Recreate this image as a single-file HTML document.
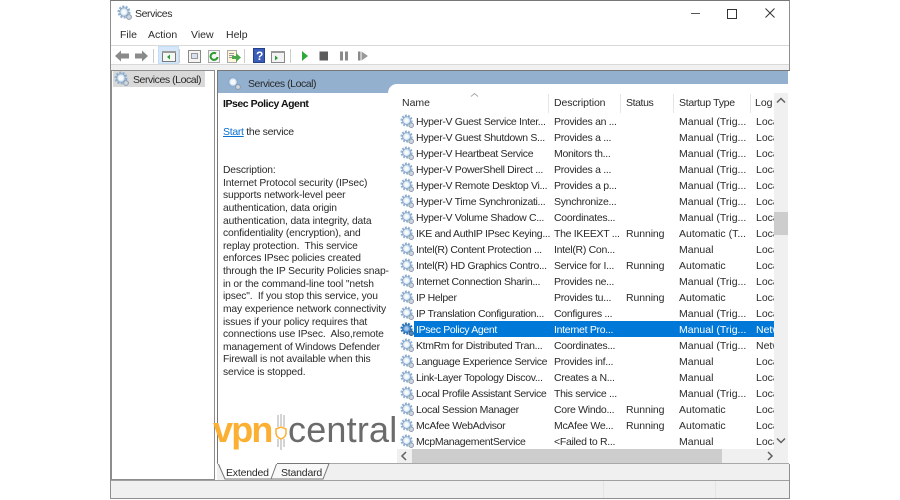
<!DOCTYPE html>
<html><head><meta charset="utf-8"><style>
html,body{margin:0;padding:0;width:900px;height:500px;background:#fff;overflow:hidden}
body{font-family:"Liberation Sans",sans-serif;font-size:10.5px;color:#2a2a2a;position:relative}
#root{position:absolute;left:0;top:0;width:900px;height:500px;filter:blur(.3px)}
.a{position:absolute;white-space:nowrap;line-height:14px}
.b{position:absolute}
.ic{position:absolute;width:16px;height:16px}
pre{margin:0;font:inherit}
.r{position:absolute;left:0;width:774px;height:16px}
.r svg{position:absolute;left:400px;top:1px;width:15px;height:15px}
.r span{position:absolute;top:2px;white-space:nowrap;line-height:14px}
.n{left:416px;letter-spacing:-.33px}
.d{left:554px;letter-spacing:-.3px}
.s{left:626px;letter-spacing:-.1px}
.t{left:679px}
.l{left:756px}
.sel{left:0}
.sel span{color:#fff}
</style></head><body>
<svg width="0" height="0" style="position:absolute"><defs>
<symbol id="g" viewBox="0 0 16 16">
<circle cx="7" cy="7" r="5.300" fill="none" stroke="#8fb0d2" stroke-width="2.400" stroke-dasharray="2 1.300"/>
<circle cx="7" cy="7" r="4.200" fill="#dce8f3" stroke="#8aa8c6" stroke-width="1"/>
<circle cx="7" cy="7" r="2.300" fill="#f7fafd"/>
<circle cx="12" cy="12" r="2.400" fill="#cfd8e0" stroke="#8c9aab" stroke-width="1"/>
</symbol>
<symbol id="gs" viewBox="0 0 16 16">
<circle cx="7" cy="7" r="5.300" fill="none" stroke="#2a72b8" stroke-width="2.400" stroke-dasharray="2 1.300"/>
<circle cx="7" cy="7" r="4.200" fill="#5d9ad4" stroke="#2a6fb2" stroke-width="1"/>
<circle cx="7" cy="7" r="2.300" fill="#a5c8ea"/>
<circle cx="12" cy="12" r="2.400" fill="#4f86bc" stroke="#28608f" stroke-width="1"/>
</symbol>
</defs></svg>
<div id="root">

<!-- window frame -->
<div class="b" style="left:110px;top:0;width:680px;height:499px;border:1px solid #8e8e8e;border-top-color:#777;box-sizing:border-box;background:#fff"></div>
<svg class="ic" style="left:117px;top:5px"><use href="#g"/></svg>
<div class="a" style="left:135px;top:7px;letter-spacing:-.4px">Services</div>
<div class="b" style="left:691px;top:13px;width:9px;height:1px;background:#555"></div>
<div class="b" style="left:727px;top:9px;width:8px;height:8px;border:1px solid #333"></div>
<svg class="b" style="left:765px;top:8px" width="10" height="10"><path d="M0.500 0.500L9.500 9.500M9.500 0.500L0.500 9.500" stroke="#333" fill="none"/></svg>

<!-- menu -->
<div class="a" style="left:120px;top:28px">File</div>
<div class="a" style="left:148px;top:28px">Action</div>
<div class="a" style="left:191px;top:28px">View</div>
<div class="a" style="left:226px;top:28px">Help</div>
<div class="b" style="left:111px;top:45px;width:678px;height:1px;background:#d9d9d9"></div>
<div class="b" style="left:111px;top:64px;width:678px;height:1px;background:#d9d9d9"></div>
<div class="b" style="left:111px;top:65px;width:678px;height:5px;background:#f0f0f0"></div>

<!-- toolbar -->
<svg class="b" style="left:111px;top:46px" width="260" height="18">
<path d="M4 10L10 4.500V7.500H18V12.500H10V15.500Z" fill="#8a8a8a"/>
<path d="M37 10L31 4.500V7.500H24V12.500H31V15.500Z" fill="#8a8a8a"/>
<rect x="42" y="3" width="1" height="14" fill="#ccc"/>
<rect x="47.500" y="0.500" width="20" height="17" fill="#d5e7f8" stroke="#c5dff5"/>
<rect x="51.500" y="5.500" width="13" height="10" fill="#f4f7f2" stroke="#7a7a7a"/><rect x="51" y="5" width="14" height="2" fill="#9a9a9a"/><path d="M59 8.500v5l-3-2.500Z" fill="#2a9a3a"/>
<rect x="68" y="3" width="1" height="14" fill="#ccc"/>
<rect x="77.500" y="4.500" width="12" height="12" fill="#f4f4f4" stroke="#8a8a8a"/><rect x="80.500" y="7.500" width="6" height="5" fill="#d6e3ef" stroke="#999"/>
<rect x="97.500" y="4.500" width="11" height="12" fill="#f6f6f6" stroke="#aaa"/><path d="M106.500 11a3.500 3.500 0 1 1-1.500-3.500" fill="none" stroke="#2a9a2a" stroke-width="2"/>
<rect x="116.500" y="4.500" width="9" height="12" fill="#fdf6d8" stroke="#aaa"/><path d="M118 7.500h5M118 9.500h5M118 11.500h3" stroke="#999"/><path d="M121 10h4V7l5 4.500-5 4.500v-3h-4Z" fill="#4aa84a"/>
<rect x="133" y="3" width="1" height="14" fill="#ccc"/>
<rect x="142.500" y="2.500" width="11" height="14" fill="#3b5cb8" stroke="#24408c"/>
<text x="145" y="14" font-size="12" font-weight="bold" fill="#fff" font-family="Liberation Sans">?</text>
<rect x="160.500" y="5.500" width="13" height="11" fill="#f3f3f3" stroke="#888"/><rect x="160" y="5" width="14" height="2" fill="#999"/><path d="M164 9.500v5l3-2.500Z" fill="#2a9a3a"/>
<rect x="179" y="3" width="1" height="14" fill="#ccc"/>
<path d="M191 5V15L197 10Z" fill="#2faa3a"/>
<rect x="208.500" y="5.500" width="8.500" height="9" fill="#5c5c5c"/>
<rect x="229" y="5.500" width="3" height="9" fill="#8a8a8a"/><rect x="234" y="5.500" width="3" height="9" fill="#8a8a8a"/>
<rect x="247" y="5.500" width="2.500" height="9" fill="#8a8a8a"/><path d="M250.500 5.500V14.500L257 10Z" fill="#999"/>
</svg>

<!-- left pane -->
<div class="b" style="left:111px;top:70px;width:104px;height:410px;box-sizing:border-box;border:1px solid #8d8d8d;background:#fff"></div>
<div class="b" style="left:113px;top:71px;width:92px;height:16px;background:#d9d9d9"></div>
<svg class="ic" style="left:114px;top:71px"><use href="#g"/></svg>
<div class="a" style="left:133px;top:73px;letter-spacing:-.45px">Services (Local)</div>

<!-- right pane -->
<div class="b" style="left:217px;top:70px;width:573px;height:394px;box-sizing:border-box;border-left:1px solid #777;border-top:1px solid #777;background:#fff"></div>
<div class="b" style="left:218px;top:71px;width:570px;height:13px;background:#93b0cf"></div>
<div class="b" style="left:218px;top:84px;width:180px;height:9px;background:#93b0cf"></div>
<div class="b" style="left:388px;top:84px;width:10px;height:9px;background:#fff;border-radius:9px 0 0 0"></div>
<svg class="ic" style="left:226px;top:75px"><use href="#g"/></svg>
<div class="a" style="left:248px;top:77px;letter-spacing:-.45px">Services (Local)</div>

<!-- description -->
<div class="a" style="left:223px;top:97px;font-weight:bold;letter-spacing:-.45px;color:#111">IPsec Policy Agent</div>
<div class="a" style="left:223px;top:125px;letter-spacing:-.3px"><span style="color:#0b6fd1;text-decoration:underline">Start</span> the service</div>
<div class="a" style="left:223px;top:165px;line-height:12.630px;font-size:10.300px;letter-spacing:-.15px"><pre>Description:
Internet Protocol security (IPsec)
supports network-level peer
authentication, data origin
authentication, data integrity, data
confidentiality (encryption), and
replay protection.  This service
enforces IPsec policies created
through the IP Security Policies snap-
in or the command-line tool "netsh
ipsec".  If you stop this service, you
may experience network connectivity
issues if your policy requires that
connections use IPsec.  Also,remote
management of Windows Defender
Firewall is not available when this
service is stopped.</pre></div>

<!-- list header -->
<div class="a" style="left:402px;top:96px">Name</div>
<div class="a" style="left:554px;top:96px;letter-spacing:-.1px">Description</div>
<div class="a" style="left:626px;top:96px;letter-spacing:-.4px">Status</div>
<div class="a" style="left:679px;top:96px;letter-spacing:-.3px">Startup Type</div>
<div class="a" style="left:755px;top:96px">Log</div>
<svg class="b" style="left:470px;top:92px" width="10" height="6"><path d="M1 4.500L4.500 1.500L8 4.500" fill="none" stroke="#aaa"/></svg>
<div class="b" style="left:548px;top:94px;width:1px;height:19px;background:#e5e5e5"></div>
<div class="b" style="left:620px;top:94px;width:1px;height:19px;background:#e5e5e5"></div>
<div class="b" style="left:673px;top:94px;width:1px;height:19px;background:#e5e5e5"></div>
<div class="b" style="left:750px;top:94px;width:1px;height:19px;background:#e5e5e5"></div>

<!-- selected -->
<div class="b" style="left:414px;top:321px;width:360px;height:16px;background:#0078d7"></div>

<!-- rows -->
<div class="r" style="top:113px"><svg><use href="#g"/></svg><span class="n">Hyper-V Guest Service Inter...</span><span class="d">Provides an ...</span><span class="t">Manual (Trig...</span><span class="l">Loca</span></div>
<div class="r" style="top:129px"><svg><use href="#g"/></svg><span class="n">Hyper-V Guest Shutdown S...</span><span class="d">Provides a ...</span><span class="t">Manual (Trig...</span><span class="l">Loca</span></div>
<div class="r" style="top:145px"><svg><use href="#g"/></svg><span class="n">Hyper-V Heartbeat Service</span><span class="d">Monitors th...</span><span class="t">Manual (Trig...</span><span class="l">Loca</span></div>
<div class="r" style="top:161px"><svg><use href="#g"/></svg><span class="n">Hyper-V PowerShell Direct ...</span><span class="d">Provides a ...</span><span class="t">Manual (Trig...</span><span class="l">Loca</span></div>
<div class="r" style="top:177px"><svg><use href="#g"/></svg><span class="n">Hyper-V Remote Desktop Vi...</span><span class="d">Provides a p...</span><span class="t">Manual (Trig...</span><span class="l">Loca</span></div>
<div class="r" style="top:193px"><svg><use href="#g"/></svg><span class="n">Hyper-V Time Synchronizati...</span><span class="d">Synchronize...</span><span class="t">Manual (Trig...</span><span class="l">Loca</span></div>
<div class="r" style="top:209px"><svg><use href="#g"/></svg><span class="n">Hyper-V Volume Shadow C...</span><span class="d">Coordinates...</span><span class="t">Manual (Trig...</span><span class="l">Loca</span></div>
<div class="r" style="top:225px"><svg><use href="#g"/></svg><span class="n">IKE and AuthIP IPsec Keying...</span><span class="d">The IKEEXT ...</span><span class="s">Running</span><span class="t">Automatic (T...</span><span class="l">Loca</span></div>
<div class="r" style="top:241px"><svg><use href="#g"/></svg><span class="n">Intel(R) Content Protection ...</span><span class="d">Intel(R) Con...</span><span class="t">Manual</span><span class="l">Loca</span></div>
<div class="r" style="top:257px"><svg><use href="#g"/></svg><span class="n">Intel(R) HD Graphics Contro...</span><span class="d">Service for I...</span><span class="s">Running</span><span class="t">Automatic</span><span class="l">Loca</span></div>
<div class="r" style="top:273px"><svg><use href="#g"/></svg><span class="n">Internet Connection Sharin...</span><span class="d">Provides ne...</span><span class="t">Manual (Trig...</span><span class="l">Loca</span></div>
<div class="r" style="top:289px"><svg><use href="#g"/></svg><span class="n">IP Helper</span><span class="d">Provides tu...</span><span class="s">Running</span><span class="t">Automatic</span><span class="l">Loca</span></div>
<div class="r" style="top:305px"><svg><use href="#g"/></svg><span class="n">IP Translation Configuration...</span><span class="d">Configures ...</span><span class="t">Manual (Trig...</span><span class="l">Loca</span></div>
<div class="r sel" style="top:321px"><svg><use href="#gs"/></svg><span class="n">IPsec Policy Agent</span><span class="d">Internet Pro...</span><span class="t">Manual (Trig...</span><span class="l">Netw</span></div>
<div class="r" style="top:337px"><svg><use href="#g"/></svg><span class="n">KtmRm for Distributed Tran...</span><span class="d">Coordinates...</span><span class="t">Manual (Trig...</span><span class="l">Netw</span></div>
<div class="r" style="top:353px"><svg><use href="#g"/></svg><span class="n">Language Experience Service</span><span class="d">Provides inf...</span><span class="t">Manual</span><span class="l">Loca</span></div>
<div class="r" style="top:369px"><svg><use href="#g"/></svg><span class="n">Link-Layer Topology Discov...</span><span class="d">Creates a N...</span><span class="t">Manual</span><span class="l">Loca</span></div>
<div class="r" style="top:385px"><svg><use href="#g"/></svg><span class="n">Local Profile Assistant Service</span><span class="d">This service ...</span><span class="t">Manual (Trig...</span><span class="l">Loca</span></div>
<div class="r" style="top:401px"><svg><use href="#g"/></svg><span class="n">Local Session Manager</span><span class="d">Core Windo...</span><span class="s">Running</span><span class="t">Automatic</span><span class="l">Loca</span></div>
<div class="r" style="top:417px"><svg><use href="#g"/></svg><span class="n">McAfee WebAdvisor</span><span class="d">McAfee We...</span><span class="s">Running</span><span class="t">Automatic</span><span class="l">Loca</span></div>
<div class="r" style="top:433px"><svg><use href="#g"/></svg><span class="n">McpManagementService</span><span class="d">&lt;Failed to R...</span><span class="t">Manual</span><span class="l">Loca</span></div>

<!-- vertical scrollbar -->
<div class="b" style="left:774px;top:93px;width:14px;height:356px;background:#f0f0f0"></div>
<div class="b" style="left:774px;top:212px;width:14px;height:23px;background:#cdcdcd"></div>
<svg class="b" style="left:776px;top:97px" width="10" height="8"><path d="M1 5.500L5 1.500L9 5.500" fill="none" stroke="#606060" stroke-width="1.500"/></svg>
<svg class="b" style="left:776px;top:437px" width="10" height="8"><path d="M1 1.500L5 5.500L9 1.500" fill="none" stroke="#606060" stroke-width="1.500"/></svg>

<!-- horizontal scrollbar -->
<div class="b" style="left:397px;top:449px;width:391px;height:14px;background:#f0f0f0"></div>
<div class="b" style="left:412px;top:449px;width:310px;height:14px;background:#cdcdcd"></div>
<svg class="b" style="left:400px;top:451px" width="8" height="10"><path d="M6 1L2 5L6 9" fill="none" stroke="#606060" stroke-width="1.500"/></svg>
<svg class="b" style="left:766px;top:451px" width="8" height="10"><path d="M2 1L6 5L2 9" fill="none" stroke="#606060" stroke-width="1.500"/></svg>

<!-- tabs -->
<div class="b" style="left:217px;top:463px;width:572px;height:17px;background:#f0f0f0;border-top:1px solid #a8a8a8;box-sizing:border-box"></div>
<svg class="b" style="left:217px;top:462px" width="120" height="18">
<path d="M1 1L8 17H54L60 1Z" fill="#fff"/>
<path d="M54 12L58 1.500H112L106 17H54Z" fill="#f8f8f8" stroke="#777"/>
<path d="M1 1L8 17H54L59.500 2" fill="#fff" stroke="#777"/>
<path d="M1 1H60" stroke="#fff" fill="none" stroke-width="2"/>
</svg>
<div class="a" style="left:226px;top:466px;letter-spacing:-.2px">Extended</div>
<div class="a" style="left:281px;top:466px;letter-spacing:-.2px">Standard</div>

<!-- status bar -->
<div class="b" style="left:111px;top:480px;width:678px;height:18px;background:#f0f0f0;border-top:1px solid #a0a0a0;box-sizing:border-box"></div>
<div class="b" style="left:603px;top:481px;width:1px;height:17px;background:#e4e4e4"></div>
<div class="b" style="left:715px;top:481px;width:1px;height:17px;background:#e4e4e4"></div>
<div class="b" style="left:111px;top:498px;width:679px;height:1px;background:#8e8e8e"></div>

<!-- watermark -->
<div class="a" style="left:213px;top:412px;font-size:36px;line-height:36px;font-weight:bold;color:#fbb034;letter-spacing:-1.800px">vpn</div>
<div class="a" style="left:288px;top:412px;font-size:36px;line-height:36px;color:#6b6b6b;letter-spacing:.2px">central</div>
<svg class="b" style="left:274px;top:414px" width="14" height="37">
<path d="M4 1V13M7 0V12M10 1V13M4 25V33M7 25V36M10 25V33" stroke="#aaa" fill="none"/>
<path d="M2 15L7 13L12 15V19Q12 23 7 25Q2 23 2 19Z" fill="#fff" stroke="#fbb034" stroke-width="1.500"/>
</svg>
</div>
</body></html>
